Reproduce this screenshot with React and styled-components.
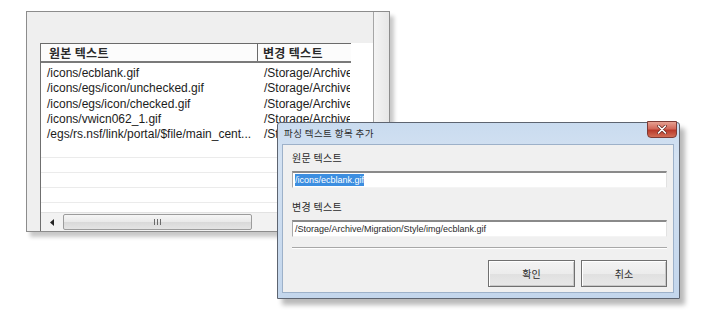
import React from "react";
import styled, { createGlobalStyle } from "styled-components";

const Global = createGlobalStyle`
  html, body { margin: 0; padding: 0; background: #ffffff; }
  body { font-family: "Liberation Sans", "Noto Sans CJK KR", sans-serif; }
`;

const Stage = styled.div`
  position: relative;
  width: 704px;
  height: 315px;
  overflow: hidden;
  padding: 11px 0 0 26px;
  box-sizing: border-box;
`;

const BackWindow = styled.div`
  display: flex;
  width: 364px;
  height: 221px;
  box-sizing: border-box;
  border: 1px solid #8c8c8c;
  background: #efefef;
  box-shadow: 4px 5px 4px rgba(0, 0, 0, 0.22);
`;

const MainPane = styled.div`
  width: 346px;
  padding: 31px 0 0 13px;
  box-sizing: border-box;
  display: flex;
`;

const SideStrip = styled.div`
  flex: 1;
  border-left: 1px solid #a6a6a6;
  background: linear-gradient(90deg, #f4f4f4, #e6e6e6);
`;

const ListBox = styled.div`
  flex: 1;
  display: flex;
  flex-direction: column;
  border-left: 1px solid #6f6f6f;
  background: #ffffff;
  font-size: 12px;
  color: #1c1c1c;
`;

const HeaderRow = styled.div`
  display: flex;
  height: 20px;
  box-sizing: border-box;
  border-top: 1px solid #6a6a6a;
  border-bottom: 2px solid #7a7a7a;
  width: 310px;
  background: #fcfcfc;
`;

const HeaderCell = styled.div`
  width: ${(p) => p.$w}px;
  box-sizing: border-box;
  padding-left: ${(p) => p.$pad}px;
  border-right: ${(p) => (p.$divider ? "1px solid #6a6a6a" : "none")};
  font-family: "Noto Sans CJK KR", sans-serif;
  font-weight: 700;
  font-size: 12px;
  line-height: 17px;
  color: #2a2a2a;
  letter-spacing: 0.3px;
`;

const Rows = styled.div`
  flex: 1;
  padding-top: 3px;
  overflow: hidden;
`;

const Row = styled.div`
  display: flex;
  height: 15.25px;
  box-sizing: border-box;
  border-bottom: 1px solid ${(p) => (p.$empty ? "#ebebeb" : "transparent")};
  line-height: 15px;
  white-space: nowrap;
`;

const Cell = styled.div`
  width: ${(p) => p.$w}px;
  padding-left: ${(p) => p.$pad}px;
  box-sizing: border-box;
  overflow: hidden;
`;

const HScroll = styled.div`
  display: flex;
  align-items: center;
  height: 19px;
  box-sizing: border-box;
  background: #f2f2f2;
  border-top: 1px solid #e2e2e2;
`;

const ArrowBtn = styled.div`
  width: 22px;
  height: 18px;
  display: flex;
  align-items: center;
  justify-content: center;
`;

const Thumb = styled.div`
  width: 189px;
  height: 16px;
  box-sizing: border-box;
  border: 1px solid #9c9c9c;
  border-radius: 2px;
  background: linear-gradient(180deg, #f6f6f6 0%, #e9e9e9 50%, #d9d9d9 51%, #e4e4e4 100%);
  display: flex;
  align-items: center;
  justify-content: center;
  gap: 2px;
`;

const Grip = styled.span`
  width: 1px;
  height: 6px;
  background: #6a6a6a;
`;

const Dialog = styled.div`
  position: absolute;
  left: 277px;
  top: 122px;
  width: 403px;
  height: 177px;
  box-sizing: border-box;
  border: 1px solid #5d6470;
  border-radius: 3px 3px 0 0;
  background: linear-gradient(180deg, #c9dbef 0%, #d4e2f2 20%, #c3d6ec 100%);
  box-shadow: 5px 6px 5px rgba(0, 0, 0, 0.28);
  display: flex;
  flex-direction: column;
`;

const TitleBar = styled.div`
  height: 21px;
  display: flex;
  justify-content: space-between;
  align-items: flex-start;
  padding-left: 6px;
  padding-right: 2px;
`;

const Title = styled.div`
  font-family: "Noto Sans CJK KR", sans-serif;
  font-size: 9.5px;
  line-height: 17px;
  margin-top: 2px;
  color: #2b2b2b;
  letter-spacing: 0.4px;
`;

const CloseBtn = styled.div`
  width: 30px;
  height: 17px;
  margin-top: -2px;
  box-sizing: border-box;
  border: 1px solid #7d3b35;
  border-radius: 0 0 4px 4px;
  background: linear-gradient(180deg, #e6a091 0%, #d2695a 45%, #b8392a 55%, #d26d55 100%);
  display: flex;
  align-items: center;
  justify-content: center;
`;

const Client = styled.div`
  flex: 1;
  margin: 0 5px 5px 4px;
  background: #f0f0f0;
  border: 1px solid #9db1c9;
  padding: 6px 6px 0 9px;
  display: flex;
  flex-direction: column;
`;

const FieldLabel = styled.div`
  font-family: "Noto Sans CJK KR", sans-serif;
  font-size: 10px;
  line-height: 14px;
  color: #2a2a2a;
  margin-top: ${(p) => p.$top}px;
  letter-spacing: 0.3px;
`;

const Input = styled.div`
  margin-top: 6px;
  height: 17px;
  box-sizing: border-box;
  background: #ffffff;
  border-top: 2px solid #8a8a8a;
  border-left: 1px solid #a9a9a9;
  border-right: 1px solid #e2e2e2;
  border-bottom: 1px solid #f4f4f4;
  padding: 1px 2px 0 2px;
  font-size: 9px;
  line-height: 12px;
  color: #2a2a2a;
  white-space: nowrap;
`;

const Selected = styled.span`
  background: #3c8ee0;
  color: #ffffff;
  padding: 1px 0;
`;

const Separator = styled.div`
  margin-top: 10px;
  height: 1px;
  background: #a8a8a8;
  border-bottom: 1px solid #ffffff;
`;

const ButtonRow = styled.div`
  display: flex;
  justify-content: flex-end;
  gap: 6px;
  margin-top: 11px;
`;

const Button = styled.div`
  width: ${(p) => p.$w}px;
  height: 27px;
  box-sizing: border-box;
  border: 1px solid #707070;
  box-shadow: inset 1px 1px 0 #ffffff, inset -1px -1px 0 #c8c8c8;
  background: linear-gradient(180deg, #f4f4f4 0%, #ececec 50%, #e0e0e0 51%, #e8e8e8 100%);
  display: flex;
  align-items: center;
  justify-content: center;
  font-family: "Noto Sans CJK KR", sans-serif;
  font-size: 10px;
  color: #2a2a2a;
`;

const rows = [
  ["/icons/ecblank.gif", "/Storage/Archive"],
  ["/icons/egs/icon/unchecked.gif", "/Storage/Archive"],
  ["/icons/egs/icon/checked.gif", "/Storage/Archive"],
  ["/icons/vwicn062_1.gif", "/Storage/Archive"],
  ["/egs/rs.nsf/link/portal/$file/main_cent...", "/Storage/Archive"],
];

export default function App() {
  return (
    <>
      <Global />
      <Stage>
        <BackWindow>
          <MainPane>
            <ListBox>
              <HeaderRow>
                <HeaderCell $w={217} $pad={8} $divider>원본 텍스트</HeaderCell>
                <HeaderCell $w={92} $pad={5}>변경 텍스트</HeaderCell>
              </HeaderRow>
              <Rows>
                {rows.map((r, i) => (
                  <Row key={i}>
                    <Cell $w={217} $pad={6}>{r[0]}</Cell>
                    <Cell $w={92} $pad={6}>{r[1]}</Cell>
                  </Row>
                ))}
                {[0, 1, 2, 3].map((i) => (
                  <Row key={"e" + i} $empty />
                ))}
              </Rows>
              <HScroll>
                <ArrowBtn>
                  <svg width="5" height="7" viewBox="0 0 5 7">
                    <path d="M4 0 L0 3.5 L4 7 Z" fill="#222" />
                  </svg>
                </ArrowBtn>
                <Thumb>
                  <Grip />
                  <Grip />
                  <Grip />
                </Thumb>
              </HScroll>
            </ListBox>
          </MainPane>
          <SideStrip />
        </BackWindow>

        <Dialog>
          <TitleBar>
            <Title>파싱 텍스트 항목 추가</Title>
            <CloseBtn>
              <svg width="10" height="9" viewBox="0 0 10 9">
                <path d="M1.5 1 L8.5 8 M8.5 1 L1.5 8" stroke="#6a2a22" strokeWidth="3" strokeLinecap="round" />
                <path d="M1.5 1 L8.5 8 M8.5 1 L1.5 8" stroke="#ffffff" strokeWidth="1.6" strokeLinecap="round" />
              </svg>
            </CloseBtn>
          </TitleBar>
          <Client>
            <FieldLabel $top={0}>원문 텍스트</FieldLabel>
            <Input>
              <Selected>/icons/ecblank.gif</Selected>
            </Input>
            <FieldLabel $top={12}>변경 텍스트</FieldLabel>
            <Input>/Storage/Archive/Migration/Style/img/ecblank.gif</Input>
            <Separator />
            <ButtonRow>
              <Button $w={87}>확인</Button>
              <Button $w={86}>취소</Button>
            </ButtonRow>
          </Client>
        </Dialog>
      </Stage>
    </>
  );
}
